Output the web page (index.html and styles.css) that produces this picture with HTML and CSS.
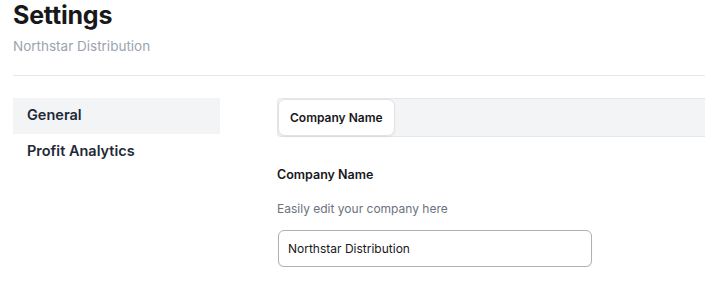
FILE: index.html
```html
<!DOCTYPE html>
<html lang="en">
<head>
    <meta charset="UTF-8">
    <meta name="viewport" content="width=device-width, initial-scale=1.0">
    <title>Settings</title>
    <link rel="stylesheet" href="styles.css">
</head>
<body>
    <div class="page">
        <header class="page-header">
            <h1>Settings</h1>
            <p class="subtitle">Northstar Distribution</p>
        </header>

        <div class="layout">
            <nav class="sidebar">
                <a href="#" class="nav-item active">General</a>
                <a href="#" class="nav-item">Profit Analytics</a>
            </nav>

            <main class="content">
                <div class="tabs">
                    <button class="tab active">Company Name</button>
                </div>

                <section class="field">
                    <h2 class="field-title">Company Name</h2>
                    <p class="field-desc">Easily edit your company here</p>
                    <input type="text" class="field-input" value="Northstar Distribution" />
                </section>
            </main>
        </div>
    </div>
</body>
</html>
```

FILE: styles.css
```css
/* Global Styles */
body {
    margin: 0;
    padding: 0;
    font-family: 'Inter', 'Liberation Sans', sans-serif;
    color: #18181b;
    background: #fff;
}

.page {
    padding-left: 13px;
}

/* Header */
.page-header {
    padding-top: 1px;
    padding-bottom: 20px;
    border-bottom: 1px solid #e5e7eb;
}

.page-header h1 {
    margin: 0;
    font-size: 25px;
    font-weight: 700;
    line-height: 29px;
    letter-spacing: -0.2px;
}

.subtitle {
    margin: 7px 0 0;
    font-size: 13.5px;
    line-height: 18px;
    color: #9ca3af;
}

/* Layout */
.layout {
    display: flex;
    gap: 57px;
    padding-top: 22px;
}

.sidebar {
    flex: 0 0 207px;
    display: flex;
    flex-direction: column;
}

.nav-item {
    display: block;
    padding: 0 14px;
    height: 36px;
    line-height: 34px;
    font-size: 14.5px;
    font-weight: 600;
    color: #1f2937;
    text-decoration: none;
}

.nav-item.active {
    background: #f3f4f6;
}

/* Tabs */
.content {
    flex: 1;
    min-width: 0;
}

.tabs {
    display: flex;
    background: #f3f4f6;
    border: 1px solid #e5e7eb;
    border-right: none;
    border-radius: 4px 0 0 4px;
    height: 37px;
}

.tab {
    font-family: inherit;
    font-size: 12px;
    font-weight: 600;
    color: #18181b;
    background: #fff;
    border: 1px solid #e2e2e2;
    border-radius: 7px;
    box-shadow: 0 1px 2px rgba(0, 0, 0, 0.06);
    padding: 0 11px;
    margin: 0;
    height: 37px;
    cursor: pointer;
}

/* Field */
.field {
    padding-top: 29px;
}

.field-title {
    margin: 0;
    font-size: 12.5px;
    font-weight: 600;
    line-height: 18px;
}

.field-desc {
    margin: 17px 0 0;
    font-size: 12px;
    line-height: 16px;
    color: #6b7280;
}

.field-input {
    display: block;
    margin: 13px 0 0 1px;
    width: 314px;
    height: 37px;
    box-sizing: border-box;
    padding: 0 9px;
    font-family: inherit;
    font-size: 12px;
    color: #18181b;
    border: 1px solid #b0b0b0;
    border-radius: 6px;
    box-shadow: 0 1px 1px rgba(0, 0, 0, 0.08);
    outline: none;
}
```
